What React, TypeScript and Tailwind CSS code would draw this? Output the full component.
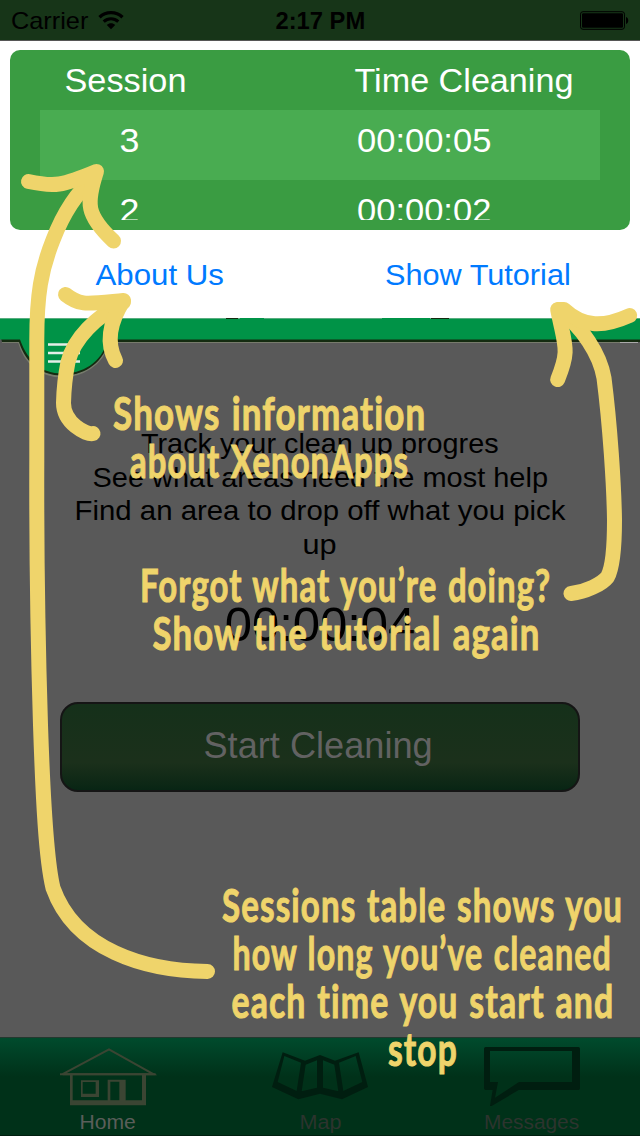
import { useLayoutEffect, useRef, useState } from "react";

type FitTextProps = { text: string; width: number; className?: string };

/** A single line of text, condensed or expanded to fill the given width. */
function FitText({ text, width, className = "" }: FitTextProps) {
  const ref = useRef<HTMLSpanElement>(null);
  const [scale, setScale] = useState(1);
  useLayoutEffect(() => {
    if (ref.current) setScale(width / ref.current.offsetWidth);
  }, [text, width]);
  return (
    <div className={`flex shrink-0 justify-center whitespace-nowrap ${className}`} style={{ width }}>
      <span ref={ref} className="inline-block shrink-0 origin-center" style={{ transform: `scaleX(${scale})` }}>
        {text}
      </span>
    </div>
  );
}

function StatusBar() {
  return (
    <header className="flex h-[41px] items-center border-b border-[#565656] bg-[#173518] pr-[11px] pl-[11px] text-2xl leading-10 text-black">
      <div className="flex flex-1 items-center gap-[10px] pt-px">
        <FitText text="Carrier" width={77} />
        <svg width="26" height="19" viewBox="0 0 26 19" className="-mt-px">
          <path d="M1.5 6.3C8 .1 18 .1 24.5 6.3" fill="none" stroke="#000" strokeWidth="3.3" />
          <path d="M5.7 10.7C10 6.8 16 6.8 20.3 10.7" fill="none" stroke="#000" strokeWidth="3.1" />
          <path d="M13 18.2L8.8 14C11.2 11.8 14.8 11.8 17.2 14Z" />
        </svg>
      </div>
      <FitText text="2:17 PM" width={90} className="pt-px font-bold" />
      <div className="flex flex-1 justify-end">
        <svg width="50" height="19" viewBox="0 0 50 19">
          <rect x="1.500" y=".7" width="44" height="17.6" rx="2.5" fill="none" stroke="#000" />
          <rect x="3" y="2.2" width="41" height="14.6" rx="1.2" />
          <path d="M47 6C50 6.5 50 12.5 47 13Z" />
        </svg>
      </div>
    </header>
  );
}

const sessions = [
  { id: "3", time: "00:00:05", shade: "bg-[#49ac51]" },
  { id: "2", time: "00:00:02", shade: "" },
];

function SessionsPanel() {
  return (
    <section className="h-[277px] bg-white px-[10px] pt-[9px]">
      <div className="flex h-[180px] flex-col rounded-[10px] bg-[#3a9c42] px-[30px] pb-[10px] text-[34px] text-white">
        <div className="flex h-[60px] shrink-0 items-center justify-between pr-[27px] pl-6">
          <FitText text="Session" width={122} />
          <FitText text="Time Cleaning" width={219} />
        </div>
        <div className="h-[110px] overflow-hidden">
          {sessions.map((s) => (
            <div key={s.id} className={`flex h-[70px] justify-between pr-[109px] pl-[79px] leading-[60px] ${s.shade}`}>
              <FitText text={s.id} width={20} />
              <FitText text={s.time} width={134} />
            </div>
          ))}
        </div>
      </div>
      <div className="flex h-[89px] items-center justify-between pr-[59px] pl-[86px] text-[30px] text-[#007aff]">
        <button><FitText text="About Us" width={128} /></button>
        <button><FitText text="Show Tutorial" width={186} /></button>
      </div>
    </section>
  );
}

function DrawerEdge() {
  return (
    <svg width="640" height="62" viewBox="0 318 640 62" className="block">
      <path d="M2 342H19C25 365 43 376.5 62 376.5S102 366 109 342H638" fill="none" stroke="#777b6c" strokeWidth="2" />
      <path d="M0 318H640V342H109C101 366 82 375.500 62 375.500S26 364 19 342H2L0 334Z" fill="#142b10" />
      <path d="M0 318H640V339.500H108C101 364 82 373.5 62 373.5S28 362 20 339.500H0Z" fill="#009347" />
      <path d="M0 318.5H640" stroke="#57ad7f" />
      <path d="M226 318.5H238M431 318.5H449" stroke="#142b10" />
      <path d="M240 318.5H264M382 318.5H430" stroke="#009347" />
      <path d="M48 344.5H80M48 353H80M48 361.5H80" stroke="#e3eee7" strokeWidth="2.7" />
      <path d="M620 342.500H638" stroke="#aaa" />
    </svg>
  );
}

function HomeScreen() {
  return (
    <main className="flex h-[657px] flex-col items-center text-black">
      <div className="mt-[47px] flex flex-col items-center text-[28px] leading-[33.5px]">
        <FitText text="Track your clean up progres" width={358} />
        <FitText text="See what areas need the most help" width={456} />
        <FitText text="Find an area to drop off what you pick" width={491} />
        <FitText text="up" width={34} />
      </div>
      <div className="mt-[33px] text-[49px] leading-[60px]">
        <FitText text="00:00:04" width={191} />
      </div>
      <button className="mt-12 flex h-[90px] w-[520px] items-center justify-center rounded-[18px] border-2 border-[#151515] bg-linear-to-b from-[#15301a] via-[#1b301b] via-68% to-[#082514] pr-1 pb-0.5 text-4xl text-[#626262]">
        <FitText text="Start Cleaning" width={229} />
      </button>
    </main>
  );
}

function HouseIcon() {
  return (
    <svg width="98" height="60" viewBox="177 50 294 180">
      <path d="M188 131.500L327 57L460 131.500Z" fill="none" stroke="#3b4533" strokeWidth="6" />
      <path d="M180 129H467V135H180Z" fill="#3b4533" />
      <path fill="#3b4533" fillRule="evenodd" d="M210 134H438V225H210ZM218 134V210H426V134Z" />
      <path fill="#3b4533" fillRule="evenodd" d="M243 150H297V200H243ZM248 155V190H287V155ZM323 148H377V212H323ZM331 154V211H358V154Z" />
    </svg>
  );
}

function MapIcon() {
  return (
    <svg width="98" height="60" viewBox="813 50 294 180">
      <path fill="#001e10" fillRule="evenodd" d="M848 66L915 91L960 74L1005 91L1076 66L1104 170L1026 207L960 190L895 207L816 170ZM853 77L833 155L890 182L903 97ZM917 103L905 183L951 172V90ZM1003 103L969 90V172L1015 183ZM1067 77L1017 97L1030 182L1087 155Z" />
    </svg>
  );
}

function MessageIcon() {
  return (
    <svg width="98" height="60" viewBox="489 50 294 180">
      <path fill="#001e10" fillRule="evenodd" d="M497 48H775Q780 48 780 53V172Q780 177 775 177H596L515 225H510L518 177H497Q492 177 492 172V53Q492 48 497 48ZM510 60V153H534L525 200L597 153H756V60Z" className="origin-center" transform="translate(0 2)" />
    </svg>
  );
}

const tabs = [
  { label: "Home", width: 56, Icon: HouseIcon, color: "text-[#5a5e5a] pl-[2px]" },
  { label: "Map", width: 42, Icon: MapIcon, color: "text-[#2c342e]" },
  { label: "Messages", width: 95, Icon: MessageIcon, color: "text-[#2c342e] pr-[3px]" },
];

function TabBar() {
  return (
    <nav className="grid h-[99px] grid-cols-3 border-t border-b border-t-[#24382f] border-b-[#001e10] bg-linear-to-b from-[#004b2d] to-[#003119] to-40% pt-[9px]">
      {tabs.map(({ label, width, Icon, color }) => (
        <div key={label} className={`flex flex-col items-center text-xl leading-6 ${color}`}>
          <Icon />
          <div className="mt-[3px]"><FitText text={label} width={width} /></div>
        </div>
      ))}
    </nav>
  );
}

const notes = [
  {
    place: "left-[114px] top-[389px] w-[311px]",
    lines: [["Shows information", 313], ["about XenonApps", 279]],
  },
  {
    place: "left-[141px] top-[561px] w-[410px]",
    lines: [["Forgot what you’re doing?", 411], ["Show the tutorial again", 388]],
  },
  {
    place: "left-[222px] top-[881px] w-[401px]",
    lines: [["Sessions table shows you", 401], ["how long you’ve cleaned", 379], ["each time you start and", 383], ["stop", 70]],
  },
] as { place: string; lines: [string, number][] }[];

function TutorialOverlay() {
  return (
    <div className="pointer-events-none absolute inset-0">
      <svg width="640" height="1136" viewBox="0 0 640 1136" className="absolute inset-0" fill="none" stroke="#efd46b" strokeWidth="15" strokeLinecap="round" strokeLinejoin="round">
        <path d="M207.500 971.500C145 971 75 950 53 888C46 859 43 800 40.500 725C38 645 36.500 540 36.800 460V340C36.800 295 41 270 53 240C63 214 77 192 94 178" />
        <path d="M28.500 181.500C54 187 62 186 96.500 171.500C86 204 86 215 113.500 241" />
        <path d="M93 433.500C86 435 63.500 423 63.500 403C64 382 66 372 68 362C74 338 96 317 123.500 302" />
        <path d="M65.500 294.500C80 306 86 304 123.500 300.500C113 317 104 339 115.500 360.500" />
        <path d="M571 593.500C586 592 602 584 607.500 577C613 567 614.500 545 614.500 520C614 485 610 425 604 378C600 354 582 327 559 309.500" />
        <path d="M557.700 379.500C570 349 565 347 557.700 309.500H564C584 328 604 327 629.700 315.500" />
      </svg>
      {notes.map((note) => (
        <div key={note.place} className={`absolute flex flex-col items-center font-[Lato,sans-serif] text-[45px] leading-[48px] font-bold tracking-[1.5px] [word-spacing:2px] text-[#efd46b] [font-variant-ligatures:none] [-webkit-text-stroke:1px_#efd46b] ${note.place}`}>
          {note.lines.map(([text, width]) => (
            <FitText key={text} text={text} width={width} />
          ))}
        </div>
      ))}
    </div>
  );
}

export default function App() {
  return (
    <div className="relative h-[1136px] w-[640px] overflow-hidden bg-[#595959] font-['Liberation_Sans',Arial,sans-serif]">
      <StatusBar />
      <SessionsPanel />
      <DrawerEdge />
      <HomeScreen />
      <TabBar />
      <TutorialOverlay />
    </div>
  );
}
